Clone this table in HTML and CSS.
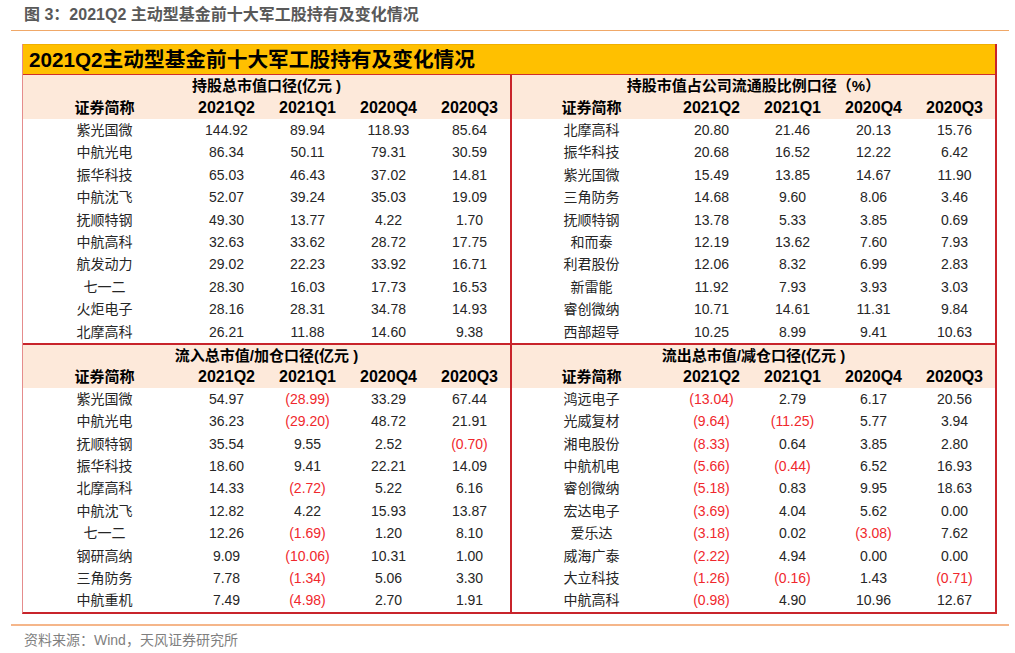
FILE: index.html
```html
<!DOCTYPE html>
<html lang="zh">
<head>
<meta charset="utf-8">
<title>2021Q2主动型基金前十大军工股持有及变化情况</title>
<link rel="stylesheet" href="styles.css">
</head>
<body>
<div class="caption">图 3：2021Q2 主动型基金前十大军工股持有及变化情况</div>
<div class="rule-top"></div>
<div class="box">
  <div class="titlebar">2021Q2主动型基金前十大军工股持有及变化情况</div>
  <div class="half top">
    <div class="panel left">
      <div class="head">
        <div class="sec">持股总市值口径(亿元 )</div>
        <div class="cols"><span>证券简称</span><span>2021Q2</span><span>2021Q1</span><span>2020Q4</span><span>2020Q3</span></div>
      </div>
      <div class="rows">
        <div class="r"><span>紫光国微</span><span>144.92</span><span>89.94</span><span>118.93</span><span>85.64</span></div>
        <div class="r"><span>中航光电</span><span>86.34</span><span>50.11</span><span>79.31</span><span>30.59</span></div>
        <div class="r"><span>振华科技</span><span>65.03</span><span>46.43</span><span>37.02</span><span>14.81</span></div>
        <div class="r"><span>中航沈飞</span><span>52.07</span><span>39.24</span><span>35.03</span><span>19.09</span></div>
        <div class="r"><span>抚顺特钢</span><span>49.30</span><span>13.77</span><span>4.22</span><span>1.70</span></div>
        <div class="r"><span>中航高科</span><span>32.63</span><span>33.62</span><span>28.72</span><span>17.75</span></div>
        <div class="r"><span>航发动力</span><span>29.02</span><span>22.23</span><span>33.92</span><span>16.71</span></div>
        <div class="r"><span>七一二</span><span>28.30</span><span>16.03</span><span>17.73</span><span>16.53</span></div>
        <div class="r"><span>火炬电子</span><span>28.16</span><span>28.31</span><span>34.78</span><span>14.93</span></div>
        <div class="r"><span>北摩高科</span><span>26.21</span><span>11.88</span><span>14.60</span><span>9.38</span></div>
      </div>
    </div>
    <div class="panel right">
      <div class="head">
        <div class="sec">持股市值占公司流通股比例口径（%）</div>
        <div class="cols"><span>证券简称</span><span>2021Q2</span><span>2021Q1</span><span>2020Q4</span><span>2020Q3</span></div>
      </div>
      <div class="rows">
        <div class="r"><span>北摩高科</span><span>20.80</span><span>21.46</span><span>20.13</span><span>15.76</span></div>
        <div class="r"><span>振华科技</span><span>20.68</span><span>16.52</span><span>12.22</span><span>6.42</span></div>
        <div class="r"><span>紫光国微</span><span>15.49</span><span>13.85</span><span>14.67</span><span>11.90</span></div>
        <div class="r"><span>三角防务</span><span>14.68</span><span>9.60</span><span>8.06</span><span>3.46</span></div>
        <div class="r"><span>抚顺特钢</span><span>13.78</span><span>5.33</span><span>3.85</span><span>0.69</span></div>
        <div class="r"><span>和而泰</span><span>12.19</span><span>13.62</span><span>7.60</span><span>7.93</span></div>
        <div class="r"><span>利君股份</span><span>12.06</span><span>8.32</span><span>6.99</span><span>2.83</span></div>
        <div class="r"><span>新雷能</span><span>11.92</span><span>7.93</span><span>3.93</span><span>3.03</span></div>
        <div class="r"><span>睿创微纳</span><span>10.71</span><span>14.61</span><span>11.31</span><span>9.84</span></div>
        <div class="r"><span>西部超导</span><span>10.25</span><span>8.99</span><span>9.41</span><span>10.63</span></div>
      </div>
    </div>
  </div>
  <div class="half bottom">
    <div class="panel left">
      <div class="head">
        <div class="sec">流入总市值/加仓口径(亿元 )</div>
        <div class="cols"><span>证券简称</span><span>2021Q2</span><span>2021Q1</span><span>2020Q4</span><span>2020Q3</span></div>
      </div>
      <div class="rows">
        <div class="r"><span>紫光国微</span><span>54.97</span><span class="neg">(28.99)</span><span>33.29</span><span>67.44</span></div>
        <div class="r"><span>中航光电</span><span>36.23</span><span class="neg">(29.20)</span><span>48.72</span><span>21.91</span></div>
        <div class="r"><span>抚顺特钢</span><span>35.54</span><span>9.55</span><span>2.52</span><span class="neg">(0.70)</span></div>
        <div class="r"><span>振华科技</span><span>18.60</span><span>9.41</span><span>22.21</span><span>14.09</span></div>
        <div class="r"><span>北摩高科</span><span>14.33</span><span class="neg">(2.72)</span><span>5.22</span><span>6.16</span></div>
        <div class="r"><span>中航沈飞</span><span>12.82</span><span>4.22</span><span>15.93</span><span>13.87</span></div>
        <div class="r"><span>七一二</span><span>12.26</span><span class="neg">(1.69)</span><span>1.20</span><span>8.10</span></div>
        <div class="r"><span>钢研高纳</span><span>9.09</span><span class="neg">(10.06)</span><span>10.31</span><span>1.00</span></div>
        <div class="r"><span>三角防务</span><span>7.78</span><span class="neg">(1.34)</span><span>5.06</span><span>3.30</span></div>
        <div class="r"><span>中航重机</span><span>7.49</span><span class="neg">(4.98)</span><span>2.70</span><span>1.91</span></div>
      </div>
    </div>
    <div class="panel right">
      <div class="head">
        <div class="sec">流出总市值/减仓口径(亿元 )</div>
        <div class="cols"><span>证券简称</span><span>2021Q2</span><span>2021Q1</span><span>2020Q4</span><span>2020Q3</span></div>
      </div>
      <div class="rows">
        <div class="r"><span>鸿远电子</span><span class="neg">(13.04)</span><span>2.79</span><span>6.17</span><span>20.56</span></div>
        <div class="r"><span>光威复材</span><span class="neg">(9.64)</span><span class="neg">(11.25)</span><span>5.77</span><span>3.94</span></div>
        <div class="r"><span>湘电股份</span><span class="neg">(8.33)</span><span>0.64</span><span>3.85</span><span>2.80</span></div>
        <div class="r"><span>中航机电</span><span class="neg">(5.66)</span><span class="neg">(0.44)</span><span>6.52</span><span>16.93</span></div>
        <div class="r"><span>睿创微纳</span><span class="neg">(5.18)</span><span>0.83</span><span>9.95</span><span>18.63</span></div>
        <div class="r"><span>宏达电子</span><span class="neg">(3.69)</span><span>4.04</span><span>5.62</span><span>0.00</span></div>
        <div class="r"><span>爱乐达</span><span class="neg">(3.18)</span><span>0.02</span><span class="neg">(3.08)</span><span>7.62</span></div>
        <div class="r"><span>威海广泰</span><span class="neg">(2.22)</span><span>4.94</span><span>0.00</span><span>0.00</span></div>
        <div class="r"><span>大立科技</span><span class="neg">(1.26)</span><span class="neg">(0.16)</span><span>1.43</span><span class="neg">(0.71)</span></div>
        <div class="r"><span>中航高科</span><span class="neg">(0.98)</span><span>4.90</span><span>10.96</span><span>12.67</span></div>
      </div>
    </div>
  </div>
</div>
<div class="rule-bottom"></div>
<div class="source">资料来源：Wind，天风证券研究所</div>
</body>
</html>
```
FILE: styles.css
```css
html, body {
  margin: 0;
  padding: 0;
  background: #ffffff;
}
body {
  font-family: "Liberation Sans", "Noto Sans CJK SC", sans-serif;
  color: #262626;
}
.caption {
  height: 30px;
  line-height: 30px;
  padding-left: 24px;
  font-size: 16px;
  font-weight: bold;
  color: #595959;
}
.rule-top {
  height: 1px;
  background: #f0a868;
  margin: 0 6px 0 11px;
}
.box {
  margin: 13px 0 0 22px;
  width: 975px;
  box-sizing: border-box;
  border-left: 1px solid #e58c8c;
  border-right: 2px solid #c8242b;
  border-bottom: 2px solid #c8242b;
}
.titlebar {
  height: 29px;
  line-height: 29px;
  background: #ffc000;
  border-top: 1px solid #f0b000;
  border-bottom: 1px solid #d0302a;
  padding-left: 6px;
  font-size: 20.7px;
  font-weight: bold;
  color: #000;
}
.half {
  display: flex;
}
.half.top {
  border-bottom: 2px solid #c8242b;
}
.panel.left {
  width: 489px;
  box-sizing: border-box;
  border-right: 2px solid #c8242b;
}
.panel.right {
  width: 483px;
}
.head {
  background: #fde9da;
  font-weight: bold;
  color: #000;
}
.top .head .sec, .top .head .cols {
  height: 22px;
  line-height: 22px;
}
.bottom .head .sec, .bottom .head .cols {
  height: 21.5px;
  line-height: 21.5px;
}
.sec {
  text-align: center;
  font-size: 15px;
}
.cols, .r {
  display: grid;
  align-items: stretch;
  justify-items: center;
}
.left .cols, .left .r {
  grid-template-columns: 163px repeat(4, 81px);
}
.right .cols, .right .r {
  grid-template-columns: 159px repeat(4, 81px);
}
.cols {
  font-size: 16px;
}
.cols span:first-child {
  font-size: 15px;
}
.r {
  height: 22.4px;
  line-height: 22.4px;
  font-size: 14px;
}
.neg {
  color: #f0282d;
}
.rule-bottom {
  height: 2px;
  background: #f5b68a;
  margin: 10px 6px 0 11px;
}
.source {
  margin-top: 4px;
  height: 20px;
  line-height: 20px;
  padding-left: 24px;
  font-size: 14px;
  color: #7f7f7f;
}
```
